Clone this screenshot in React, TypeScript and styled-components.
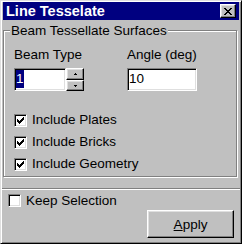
import React from 'react'
import styled, { createGlobalStyle } from 'styled-components'

const GlobalStyle = createGlobalStyle`
  html, body {
    margin: 0;
    padding: 0;
    background: #c0c0c0;
  }
  body {
    font-family: "Liberation Sans", Arial, sans-serif;
    font-size: 13.5px;
    color: #000;
  }
  * {
    box-sizing: border-box;
  }
`

const Window = styled.div`
  width: 242px;
  height: 244px;
  display: flex;
  flex-direction: column;
  background: #c0c0c0;
  border: 1px solid;
  border-color: #dfdfdf #000 #000 #dfdfdf;
  box-shadow: inset 1px 1px #fff, inset -1px -1px #808080;
  padding: 1px 2px 2px 2px;
`

const TitleBar = styled.div`
  height: 18px;
  flex-shrink: 0;
  background: #000080;
  color: #fff;
  display: flex;
  align-items: center;
  justify-content: space-between;
  padding: 0 3px 0 3px;
  font-weight: bold;
  font-size: 14.5px;
  line-height: 18px;
`

const Raised = styled.button<{ $w: number; $h: number }>`
  width: ${({ $w }) => $w}px;
  height: ${({ $h }) => $h}px;
  padding: 0;
  margin: 0;
  background: #c0c0c0;
  border: 1px solid;
  border-color: #fff #000 #000 #fff;
  box-shadow: inset -1px -1px #808080, inset 1px 1px #dfdfdf;
  display: flex;
  align-items: center;
  justify-content: center;
  font: inherit;
  color: #000;
`

const GroupBox = styled.fieldset`
  margin: 2px 2px 0 0;
  padding: 0;
  min-inline-size: 0;
  border: 1px solid #808080;
  box-shadow: inset 1px 1px #fff, 1px 1px #fff;
`

const Legend = styled.legend`
  margin-left: 6px;
  padding: 0 1px;
  line-height: 17px;
  background: #c0c0c0;
`

const GroupBody = styled.div`
  padding: 8px 0 1px 10px;
  display: flex;
  flex-direction: column;
`

const FieldGrid = styled.div`
  display: grid;
  grid-template-columns: 113px auto;
  row-gap: 5px;
  justify-items: start;
`

const FieldLabel = styled.div`
  line-height: 16px;
`

const NumberBox = styled.div`
  display: flex;
`

const Edit = styled.div<{ $w: number }>`
  width: ${({ $w }) => $w}px;
  height: 23px;
  background: #fff;
  border: 1px solid;
  border-color: #808080 #fff #fff #808080;
  box-shadow: inset 1px 1px #000, inset -1px -1px #dfdfdf;
  padding: 1px 0 0 1px;
  line-height: 18px;
  display: flex;
  align-items: flex-start;
`

const Selected = styled.span`
  background: #000080;
  color: #fff;
  line-height: 18px;
`

const Spin = styled.div`
  display: flex;
  flex-direction: column;
`

const CheckList = styled.div`
  margin-top: 18px;
  display: flex;
  flex-direction: column;
`

const CheckRow = styled.label<{ $h: number }>`
  height: ${({ $h }) => $h}px;
  display: flex;
  align-items: center;
  gap: 5px;
  line-height: 16px;
`

const Box = styled.span`
  width: 13px;
  height: 13px;
  flex-shrink: 0;
  background: #fff;
  border: 1px solid;
  border-color: #808080 #fff #fff #808080;
  box-shadow: inset 1px 1px #000, inset -1px -1px #dfdfdf;
  display: flex;
  align-items: center;
  justify-content: center;
`

const Separator = styled.div`
  margin: 11px -1px 0 -1px;
  height: 2px;
  border-top: 1px solid #808080;
  border-bottom: 1px solid #fff;
`

const Footer = styled.div`
  display: flex;
  flex-direction: column;
  padding: 4px 5px 0 5px;
`

const ButtonRow = styled.div`
  display: flex;
  justify-content: flex-end;
  margin-top: 3px;
`

const CHECK = ['......#', '.....##', '#...###', '##.###.', '#####..', '.###...', '..#....']
const CLOSE = ['##....##', '.##..##.', '..####..', '...##...', '..####..', '.##..##.', '##....##']
const UP = ['.#.', '###']
const DOWN = ['###', '.#.']

const PixelGlyph = ({ rows }: { rows: string[] }) => (
  <svg width={rows[0].length} height={rows.length} shapeRendering="crispEdges">
    {rows.flatMap((row, y) =>
      row.split('').map((c, x) =>
        c === '#' ? <rect key={`${x}-${y}`} x={x} y={y} width={1} height={1} fill="#000" /> : null
      )
    )}
  </svg>
)

const Checkbox = ({ label, checked, height }: { label: string; checked: boolean; height: number }) => (
  <CheckRow $h={height}>
    <Box>{checked && <PixelGlyph rows={CHECK} />}</Box>
    <span>{label}</span>
  </CheckRow>
)

export default function App() {
  return (
    <>
      <GlobalStyle />
      <Window>
        <TitleBar>
          <span>Line Tesselate</span>
          <Raised $w={16} $h={14}>
            <PixelGlyph rows={CLOSE} />
          </Raised>
        </TitleBar>
        <GroupBox>
          <Legend>Beam Tessellate Surfaces</Legend>
          <GroupBody>
            <FieldGrid>
              <FieldLabel>Beam Type</FieldLabel>
              <FieldLabel>Angle (deg)</FieldLabel>
              <NumberBox>
                <Edit $w={52}>
                  <Selected>1</Selected>
                </Edit>
                <Spin>
                  <Raised $w={18} $h={12}>
                    <PixelGlyph rows={UP} />
                  </Raised>
                  <Raised $w={18} $h={11}>
                    <PixelGlyph rows={DOWN} />
                  </Raised>
                </Spin>
              </NumberBox>
              <Edit $w={70}>10</Edit>
            </FieldGrid>
            <CheckList>
              <Checkbox label="Include Plates" checked height={22} />
              <Checkbox label="Include Bricks" checked height={22} />
              <Checkbox label="Include Geometry" checked height={22} />
            </CheckList>
          </GroupBody>
        </GroupBox>
        <Separator />
        <Footer>
          <Checkbox label="Keep Selection" checked={false} height={13} />
          <ButtonRow>
            <Raised $w={87} $h={28}>
              <span>
                <u>A</u>pply
              </span>
            </Raised>
          </ButtonRow>
        </Footer>
      </Window>
    </>
  )
}
